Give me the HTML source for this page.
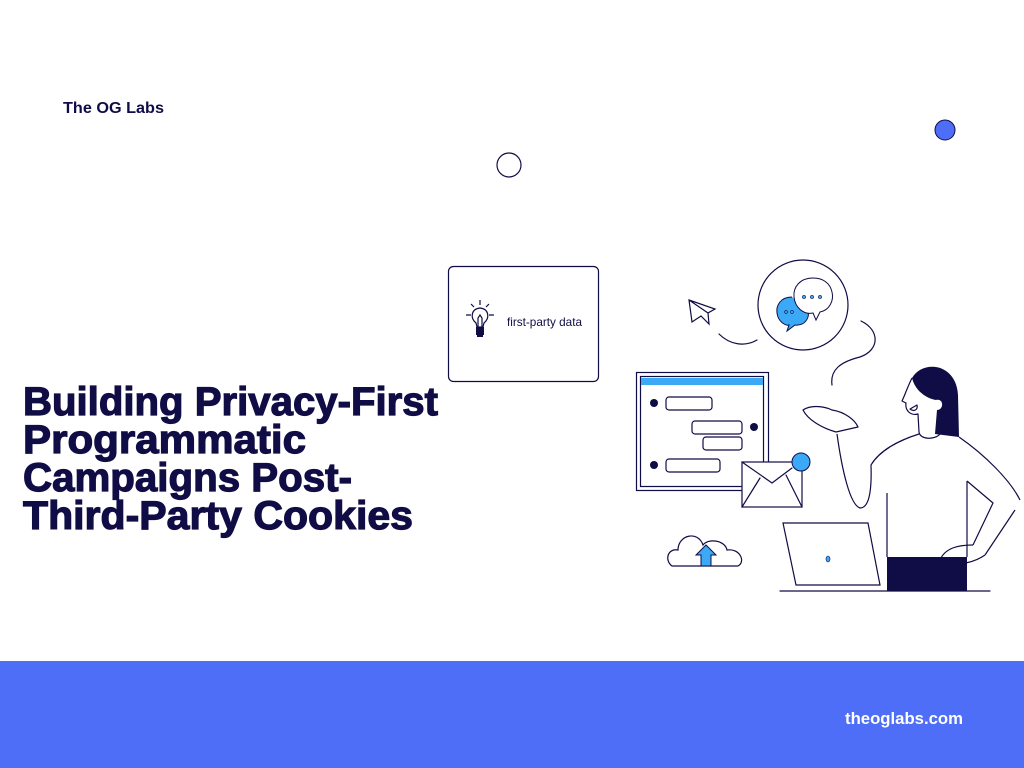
<!DOCTYPE html>
<html><head><meta charset="utf-8"><style>
html,body{margin:0;padding:0;background:#fff;width:1024px;height:768px;overflow:hidden}
svg{display:block}
</style></head><body>
<svg width="1024" height="768" viewBox="0 0 1024 768" xmlns="http://www.w3.org/2000/svg" font-family="Liberation Sans, sans-serif">
<rect x="0" y="661" width="1024" height="107" fill="#4f6ef8"/>
<text x="845" y="724" font-size="17" font-weight="bold" fill="#fff" textLength="118" lengthAdjust="spacingAndGlyphs">theoglabs.com</text>
<text x="63" y="113" font-size="16" font-weight="bold" fill="#100c45" textLength="101" lengthAdjust="spacingAndGlyphs">The OG Labs</text>
<g font-size="40" font-weight="bold" fill="#100c45" stroke="#100c45" stroke-width="1.2">
<text x="23" y="415" textLength="415" lengthAdjust="spacingAndGlyphs">Building Privacy-First</text>
<text x="23" y="453" textLength="283" lengthAdjust="spacingAndGlyphs">Programmatic</text>
<text x="23" y="491" textLength="329" lengthAdjust="spacingAndGlyphs">Campaigns Post-</text>
<text x="23" y="529" textLength="390" lengthAdjust="spacingAndGlyphs">Third-Party Cookies</text>
</g>
<circle cx="509" cy="165" r="12" fill="none" stroke="#100c45" stroke-width="1.2"/>
<circle cx="945" cy="130" r="10" fill="#4f6ef8" stroke="#100c45" stroke-width="1"/>
<!-- card -->
<rect x="448.5" y="266.5" width="150" height="115" rx="5" fill="#fff" stroke="#100c45" stroke-width="1.2"/>
<g stroke="#100c45" stroke-width="1.2" fill="none">
<path d="M476 323 C470 318 471 309 480 308 C489 309 490 318 484 323 L483 327 H477 Z"/>
<path d="M478 327 L478 318 L480 315 L482 318 L482 327"/>
<path d="M480 300 v5 M466 315 h5 M489 315 h5 M471 304 l3 3 M489 304 l-3 3"/>
</g>
<rect x="476" y="327" width="8" height="8" fill="#100c45"/>
<rect x="477" y="335" width="6" height="2" fill="#100c45"/>
<text x="507" y="326" font-size="12" fill="#100c45" textLength="75" lengthAdjust="spacingAndGlyphs">first-party data</text>
<!-- illustration -->
<g stroke="#100c45" stroke-width="1.2" fill="none" stroke-linecap="round">
<circle cx="803" cy="305" r="45"/>
<path d="M719 334 C730 345 745 347 757 340"/>
<path d="M861 321 C880 330 880 350 860 357 C840 362 830 370 832 385"/>
<path d="M689 300 L715 309 L708 313 L709 324 L701 316 L692 322 Z M708 313 L689 300"/>
<rect x="636.5" y="372.5" width="132" height="118"/>
<rect x="640.5" y="376.5" width="123" height="110"/>
<rect x="666" y="397" width="46" height="13" rx="3"/>
<rect x="692" y="421" width="50" height="13" rx="3"/>
<rect x="703" y="437" width="39" height="13" rx="3"/>
<rect x="666" y="459" width="54" height="13" rx="3"/>
<rect x="742" y="462" width="60" height="45" fill="#fff"/>
<path d="M742 462 L772 483 L792 468 M742 507 L760 478 M802 507 L786 475"/>
<path d="M672 566 C664 560 668 548 678 550 C678 535 698 530 703 545 C708 538 725 540 727 550 C740 548 746 562 738 566 Z"/>
<path d="M783 523 L868 523 L880 585 L796 585 Z"/>
<path d="M780 591 L990 591"/>
</g>
<rect x="641" y="378" width="122" height="7" fill="#3ba9f5"/>
<circle cx="654" cy="403" r="4" fill="#100c45"/>
<circle cx="754" cy="427" r="4" fill="#100c45"/>
<circle cx="654" cy="465" r="4" fill="#100c45"/>
<circle cx="801" cy="462" r="9" fill="#3ba9f5" stroke="#100c45"/>
<path d="M706 545 L716 555 L711 555 L711 566 L701 566 L701 555 L696 555 Z" fill="#3ba9f5" stroke="#100c45"/>
<ellipse cx="828" cy="559" rx="2" ry="3" fill="#3ba9f5" stroke="#100c45" stroke-width=".6"/>
<!-- chat bubbles -->
<path d="M792 297 C780 297 776 306 777 313 C778 322 786 326 789 325 L787 331 L795 325 C805 326 810 318 808 310" fill="#3ba9f5" stroke="#100c45"/>
<path d="M813 278 C800 278 793 287 794 297 C795 307 803 315 813 313 L816 320 L820 312 C830 310 834 300 832 292 C830 283 823 278 813 278 Z" fill="#fff" stroke="#100c45"/>
<g fill="#3ba9f5" stroke="#100c45" stroke-width=".6"><circle cx="804" cy="297" r="1.6"/><circle cx="812" cy="297" r="1.6"/><circle cx="820" cy="297" r="1.6"/><circle cx="786" cy="312" r="1.4"/><circle cx="792" cy="312" r="1.4"/></g>
<!-- woman -->
<path d="M912 378 C922 360 956 362 958 395 L959 437 L935 434 L937 410 C944 410 944 398 936 400 C925 398 915 390 912 378 Z" fill="#100c45"/>
<g stroke="#100c45" stroke-width="1.2" fill="none" stroke-linejoin="round">
<path d="M912 378 C907 388 905 395 902 401 L906 403 C905 410 910 416 918 414 L919 432"/>
<path d="M910 409 L917 405 C918 410 914 412 910 409 Z"/>
<path d="M919 432 C920 440 935 440 940 434"/>
<path d="M837 434 C842 470 850 505 860 508 C868 508 872 495 871 465 C880 450 900 440 919 434"/>
<path d="M959 437 C985 455 1010 480 1020 500"/>
<path d="M967 481 L993 503 L973 545"/>
<path d="M967 481 L967 557 M887 493 L887 557"/>
<path d="M1015 510 L985 555"/>
<path d="M836 432 L858 427 C855 420 845 412 832 410 C826 407 812 404 803 410 C808 420 822 428 836 432"/>
<path d="M973 545 C958 545 945 548 940 560 M985 555 C975 562 960 566 948 562"/>
</g>
<rect x="887" y="557" width="80" height="34" fill="#100c45"/>
</svg>
</body></html>
